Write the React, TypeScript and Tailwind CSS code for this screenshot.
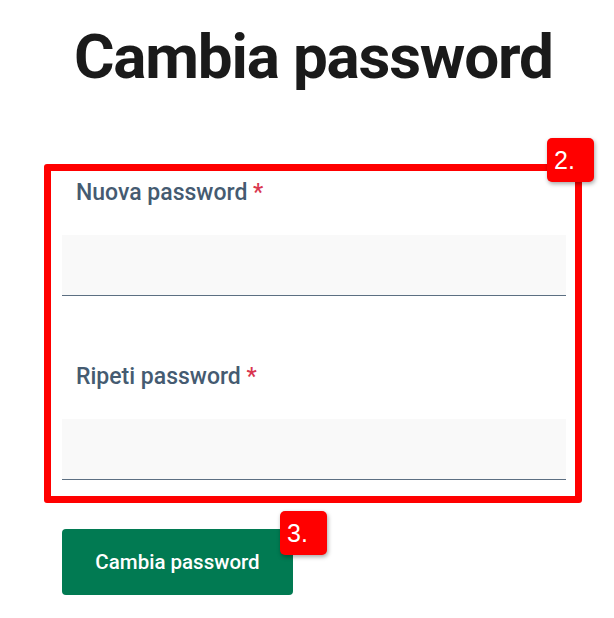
import React from "react";

const Badge = ({ label, className }: { label: string; className: string }) => (
    <span
        className={
            "absolute w-[47px] h-[44px] pl-[7px] bg-[#ff0000] text-white rounded-[5px] shadow-[1px_2px_4px_rgba(0,0,0,0.35)] font-['Liberation_Sans',Arial,sans-serif] text-[25px] leading-[44px] " +
            className
        }
    >
        {label}
    </span>
);

const Field = ({ label }: { label: string }) => (
    <div className="flex flex-col gap-[26px]">
        <label className="pl-[14px] text-[23px] leading-[32px] font-medium text-[#455b71]">
            {label} <span className="text-[#d9364f]">*</span>
        </label>
        <input
            type="password"
            className="w-full h-[61px] bg-[#f9f9f9] border-b border-[#5c6f82] outline-none"
        />
    </div>
);

export default function App() {
    return (
        <div className="flex flex-col items-start min-h-[618px] w-[614px] pt-[26px] pl-[62px] bg-white font-['Roboto',sans-serif]">
            <h1 className="pl-[12px] text-[62px] leading-[62px] font-bold tracking-[-1.2px] text-[#1a1a1a]">
                Cambia password
            </h1>
            <div className="relative flex flex-col gap-[65px] mt-[89px] w-[504px]">
                <Field label="Nuova password" />
                <Field label="Ripeti password" />
                <div className="absolute -top-[13px] -left-[18px] -right-[16px] -bottom-[23px] border-[7px] border-[#ff0000] rounded-[3px] pointer-events-none"></div>
                <Badge label="2." className="left-[485px] -top-[39px]" />
            </div>
            <div className="relative mt-[49px]">
                <button className="w-[231px] h-[66px] bg-[#017a52] rounded-[4px] text-white text-[20.5px] font-medium">
                    Cambia password
                </button>
                <Badge label="3." className="left-[218px] -top-[18px]" />
            </div>
        </div>
    );
}
